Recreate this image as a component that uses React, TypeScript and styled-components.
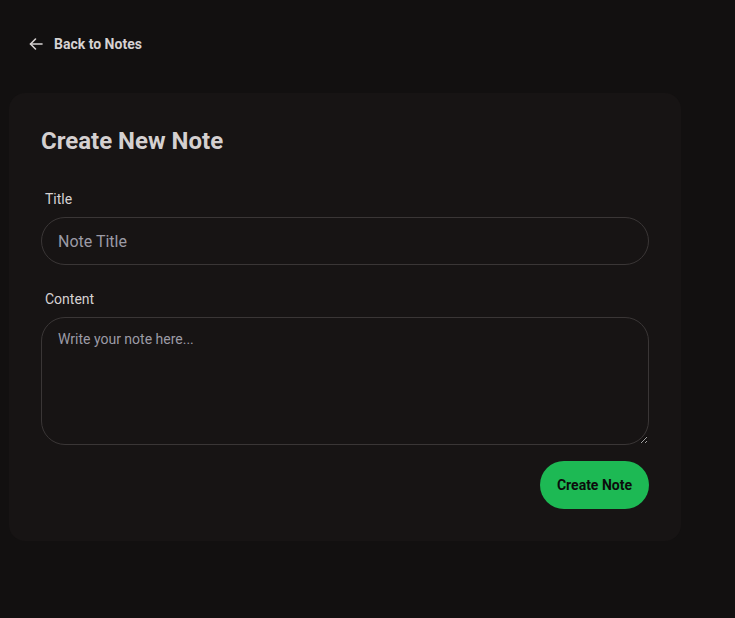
import React from "react";
import styled, { createGlobalStyle } from "styled-components";

const Global = createGlobalStyle`
  html, body { margin: 0; padding: 0; background: #121010; }
  body { font-family: Roboto, "Noto Sans", sans-serif; color: #d6d2d2; }
  * { box-sizing: border-box; }
`;

const Page = styled.div`
  min-height: 618px;
  padding: 34px 9px 0 9px;
  display: flex;
  flex-direction: column;
  align-items: flex-start;
  gap: 39px;
`;

const BackLink = styled.a`
  display: flex;
  align-items: center;
  gap: 10px;
  margin-left: 19px;
  height: 20px;
  font-size: 14px;
  font-weight: 700;
  color: #d6d2d2;
  text-decoration: none;
  cursor: pointer;
`;

const Card = styled.div`
  width: 672px;
  background: #171414;
  border-radius: 16px;
  padding: 32px;
  display: flex;
  flex-direction: column;
`;

const Heading = styled.h1`
  margin: 2px 0 33px 0;
  font-size: 24px;
  line-height: 29px;
  font-weight: 700;
  color: #d4d0d0;
`;

const Field = styled.div`
  display: flex;
  flex-direction: column;
  gap: 8px;
  margin-bottom: 24px;
`;

const Label = styled.label`
  font-size: 14px;
  line-height: 20px;
  padding-left: 4px;
  color: #d6d2d2;
`;

const Input = styled.input`
  height: 48px;
  width: 100%;
  border-radius: 24px;
  border: 1px solid #3a3636;
  background: transparent;
  padding: 0 16px;
  font-family: inherit;
  font-size: 16px;
  color: #d6d2d2;
  outline: none;
  &::placeholder { color: #9c9ba6; }
`;

const TextArea = styled.textarea`
  height: 128px;
  width: 100%;
  border-radius: 24px;
  border: 1px solid #3a3636;
  background: transparent;
  padding: 11px 16px;
  font-family: inherit;
  font-size: 14px;
  line-height: 20px;
  color: #d6d2d2;
  outline: none;
  resize: vertical;
  display: block;
  &::placeholder { color: #9c9ba6; }
`;

const Actions = styled.div`
  display: flex;
  justify-content: flex-end;
  margin-top: -8px;
`;

const Button = styled.button`
  height: 48px;
  padding: 0 17px;
  border-radius: 24px;
  border: none;
  background: #1db954;
  color: #0c0c0c;
  font-family: inherit;
  font-size: 14px;
  font-weight: 700;
  cursor: pointer;
`;

export default function App() {
  return (
    <>
      <Global />
      <Page>
        <BackLink>
          <svg width="16" height="16" viewBox="0 0 16 16" fill="none" stroke="#d6d2d2" strokeWidth="1.6" strokeLinecap="round" strokeLinejoin="round">
            <path d="M14 8H2.5" />
            <path d="M7.5 3L2.5 8l5 5" />
          </svg>
          Back to Notes
        </BackLink>
        <Card>
          <Heading>Create New Note</Heading>
          <Field>
            <Label>Title</Label>
            <Input placeholder="Note Title" />
          </Field>
          <Field>
            <Label>Content</Label>
            <TextArea placeholder="Write your note here..." />
          </Field>
          <Actions>
            <Button>Create Note</Button>
          </Actions>
        </Card>
      </Page>
    </>
  );
}
